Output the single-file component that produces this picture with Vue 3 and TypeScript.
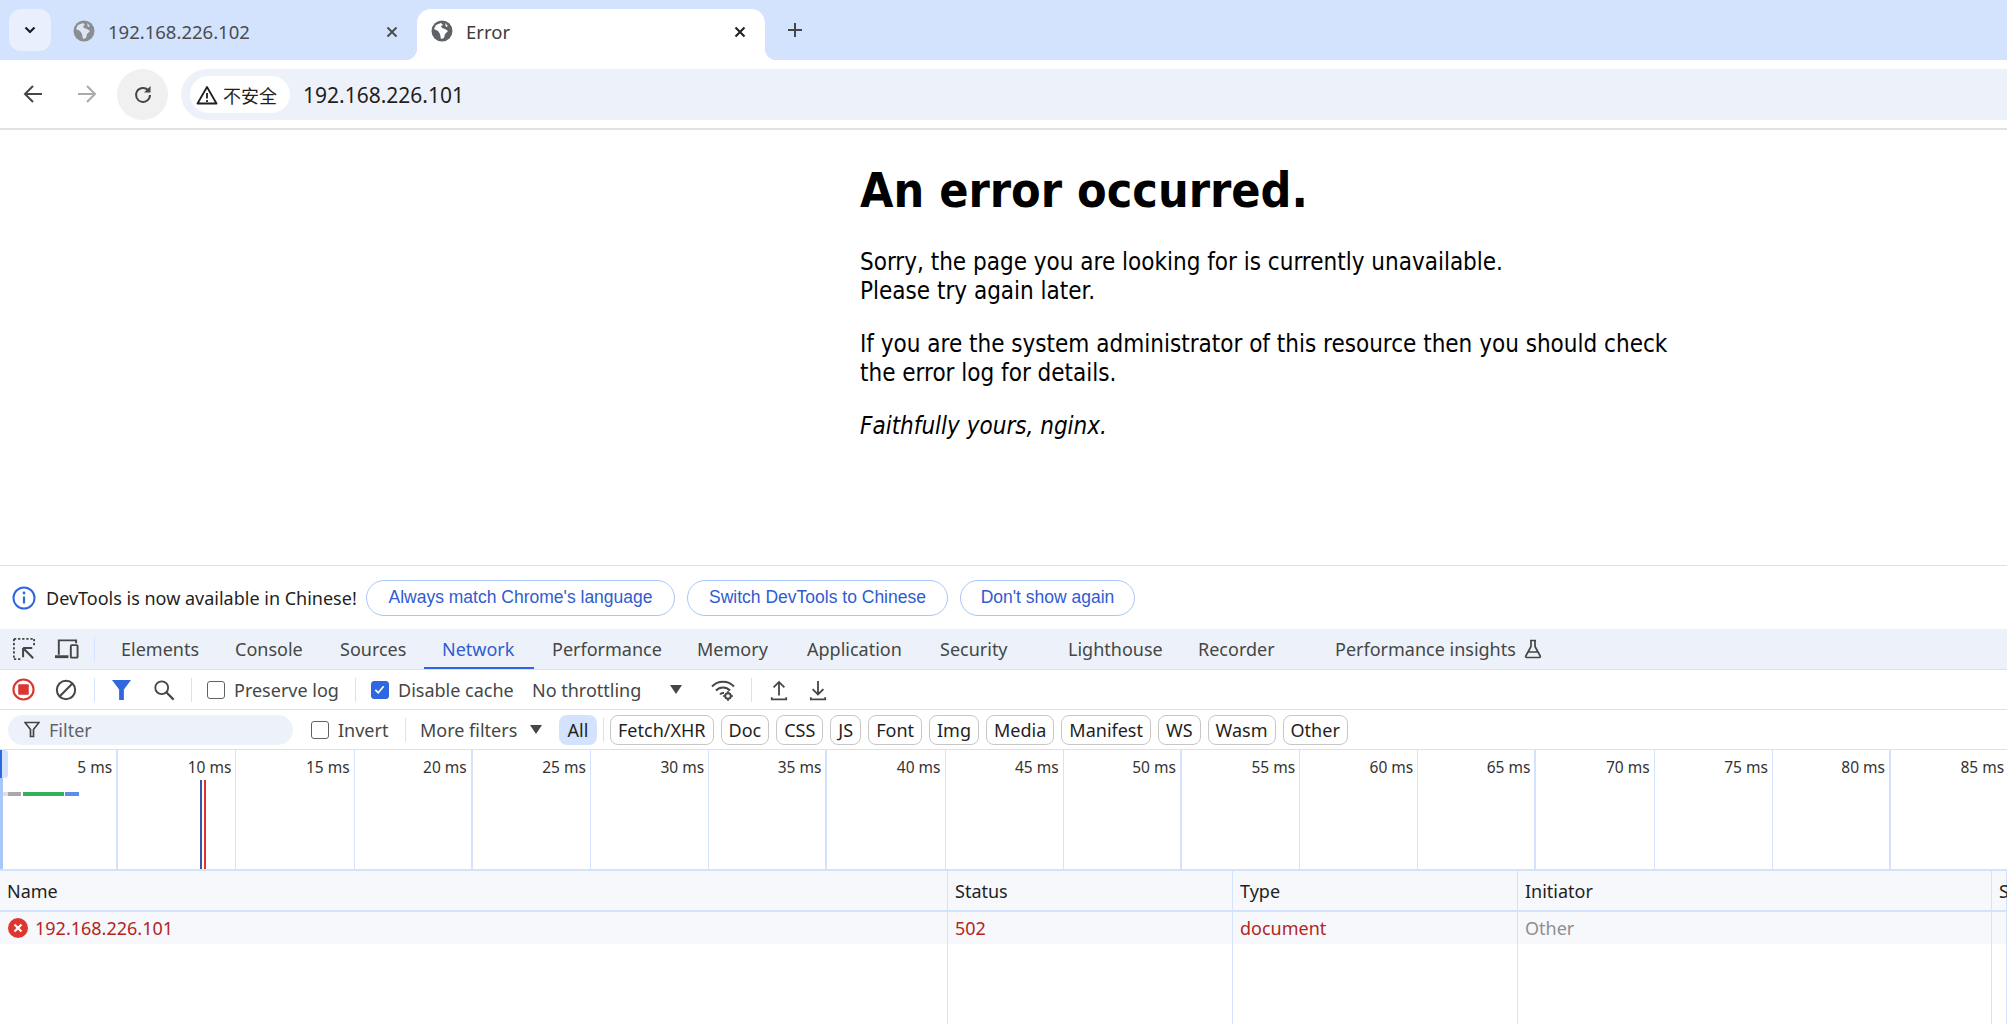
<script setup lang="ts">
const tabs = [
  { label: 'Elements', w: 114 },
  { label: 'Console', w: 105 },
  { label: 'Sources', w: 102 },
  { label: 'Network', w: 110, active: true },
  { label: 'Performance', w: 145 },
  { label: 'Memory', w: 110 },
  { label: 'Application', w: 133 },
  { label: 'Security', w: 128 },
  { label: 'Lighthouse', w: 130 },
  { label: 'Recorder', w: 135 },
]
const pills = ['Fetch/XHR', 'Doc', 'CSS', 'JS', 'Font', 'Img', 'Media', 'Manifest', 'WS', 'Wasm', 'Other']
const ticks = Array.from({ length: 18 }, (_, i) => (i + 1) * 5)
const cols = [
  { head: 'Name', w: 948 },
  { head: 'Status', w: 285, val: '502', cls: 'err' },
  { head: 'Type', w: 285, val: 'document', cls: 'err' },
  { head: 'Initiator', w: 474, val: 'Other', cls: 'muted' },
  { head: 'S', w: 15 },
]
</script>

<template>
  <div class="app">
    <header class="strip">
      <button class="tabsearch" aria-label="Search tabs">
        <svg width="14" height="14" viewBox="0 0 14 14"><path d="M2.5 4.5 7 9l4.5-4.5" fill="none" stroke="#1f1f1f" stroke-width="2.2"/></svg>
      </button>
      <div class="tab">
        <svg class="globe" viewBox="0 0 22 22"><circle cx="11" cy="11" r="10.5" fill="#8a8d91"/><path d="M10 3 5 5 3 9l4 2 2 3 1 5 3-1 1-4 3-3-3-2-3-1-1-2 2-1z M14 3l3 3-2 1z" fill="#dfe6f2"/></svg>
        <span class="tabtitle dim">192.168.226.102</span>
        <svg class="close" viewBox="0 0 14 14"><path d="M2.5 2.5l9 9m0-9-9 9" stroke="#444746" stroke-width="1.8"/></svg>
      </div>
      <div class="tab active">
        <svg class="globe" viewBox="0 0 22 22"><circle cx="11" cy="11" r="10.5" fill="#5f6368"/><path d="M10 3 5 5 3 9l4 2 2 3 1 5 3-1 1-4 3-3-3-2-3-1-1-2 2-1z M14 3l3 3-2 1z" fill="#fff"/></svg>
        <span class="tabtitle">Error</span>
        <svg class="close" viewBox="0 0 14 14"><path d="M2.5 2.5l9 9m0-9-9 9" stroke="#1f1f1f" stroke-width="2"/></svg>
      </div>
      <svg class="plus" viewBox="0 0 18 18"><path d="M9 2v14M2 9h14" stroke="#444746" stroke-width="2"/></svg>
    </header>

    <nav class="toolbar">
      <svg class="navicon" viewBox="0 0 22 22"><path d="M20 11H3.5M11 3l-8 8 8 8" fill="none" stroke="#444746" stroke-width="2"/></svg>
      <svg class="navicon fwd" viewBox="0 0 22 22"><path d="M2 11h16.5M11 3l8 8-8 8" fill="none" stroke="#a9abad" stroke-width="2"/></svg>
      <div class="reload">
        <svg width="22" height="22" viewBox="0 0 22 22"><path d="M18 11a7 7 0 1 1-2-5" fill="none" stroke="#444746" stroke-width="2"/><path d="M18.5 2v6.500H12z" fill="#444746"/></svg>
      </div>
      <div class="omnibox">
        <div class="chip">
          <svg width="22" height="20" viewBox="0 0 22 20"><path d="M11 2 1.500 18.500h19z" fill="none" stroke="#1f1f1f" stroke-width="1.800" stroke-linejoin="round"/><path d="M11 8v5.500M11 15v2" stroke="#1f1f1f" stroke-width="1.800"/></svg>
          <span>不安全</span>
        </div>
        <span class="url">192.168.226.101</span>
      </div>
    </nav>

    <main class="page">
      <h1>An error occurred.</h1>
      <p>Sorry, the page you are looking for is currently unavailable.<br />Please try again later.</p>
      <p>If you are the system administrator of this resource then you should check the error log for details.</p>
      <p><em>Faithfully yours, nginx.</em></p>
    </main>

    <section class="devtools">
      <div class="infobar">
        <svg class="info" viewBox="0 0 24 24"><circle cx="12" cy="12" r="10.500" fill="none" stroke="#2f67e0" stroke-width="2"/><path d="M12 10.500v7" stroke="#2f67e0" stroke-width="2.200"/><circle cx="12" cy="7" r="1.400" fill="#2f67e0"/></svg>
        <span class="infotext">DevTools is now available in Chinese!</span>
        <button class="infobtn b1">Always match Chrome's language</button>
        <button class="infobtn b2">Switch DevTools to Chinese</button>
        <button class="infobtn b3">Don't show again</button>
      </div>

      <div class="dtabs">
        <svg class="inspect" viewBox="0 0 24 24"><path d="M1 1h22M1 1v22M1 23h8M23 1v8" fill="none" stroke="#444746" stroke-width="2" stroke-dasharray="2.500 2"/><path d="M11 11h10M11 11v10M11 11l11 11" fill="none" stroke="#444746" stroke-width="2.200"/></svg>
        <svg class="device" viewBox="0 0 26 22"><path d="M5 17V2h18v3" fill="none" stroke="#444746" stroke-width="2"/><path d="M1 19h14" stroke="#444746" stroke-width="3"/><rect x="17.500" y="7" width="7" height="13" rx="1" fill="none" stroke="#444746" stroke-width="2"/></svg>
        <i class="vsep tabsep"></i>
        <div v-for="t in tabs" :key="t.label" class="dtab" :class="{ on: t.active }" :style="{ width: t.w + 'px' }">{{ t.label }}</div>
        <div class="dtab insights">Performance insights
          <svg class="flask" viewBox="0 0 18 20"><path d="M6 1.500h6M7 1.500v6L1.800 17a1 1 0 0 0 1 1.500h12.400a1 1 0 0 0 1-1.500L11 7.500v-6M4.500 13h9" fill="none" stroke="#444746" stroke-width="1.700"/></svg>
        </div>
      </div>

      <div class="nettools">
        <svg class="rec" viewBox="0 0 24 24"><circle cx="12" cy="12" r="10.500" fill="none" stroke="#dc362e" stroke-width="2.200"/><rect x="6.500" y="6.500" width="11" height="11" rx="1" fill="#dc362e"/></svg>
        <svg class="clear" viewBox="0 0 24 24"><circle cx="12" cy="12" r="10" fill="none" stroke="#444746" stroke-width="2.200"/><path d="M19 5 5 19" stroke="#444746" stroke-width="2.200"/></svg>
        <i class="vsep s1"></i>
        <svg class="funnel" viewBox="0 0 20 22"><path d="M0 1h20l-7.500 10v11h-5V11z" fill="#2f67e0"/></svg>
        <svg class="search" viewBox="0 0 24 24"><circle cx="9.500" cy="9.500" r="7" fill="none" stroke="#444746" stroke-width="2"/><path d="m14.500 14.500 8 8" stroke="#444746" stroke-width="2.400"/></svg>
        <i class="vsep s2"></i>
        <label class="check c1"><i class="box"></i>Preserve log</label>
        <i class="vsep s3"></i>
        <label class="check c2">
          <i class="box checked"><svg viewBox="0 0 18 18"><path d="m4 9.500 3.500 3.500L14 5" fill="none" stroke="#fff" stroke-width="2"/></svg></i>Disable cache
        </label>
        <span class="throttle">No throttling</span>
        <i class="tri t1"></i>
        <svg class="wifi" viewBox="0 0 26 24"><path d="M2 8.500a15 15 0 0 1 22 0M6 12.500a9.500 9.500 0 0 1 14 0M10 16.500a4 4 0 0 1 4-1.500" fill="none" stroke="#444746" stroke-width="2"/><circle cx="18" cy="18" r="2.800" fill="none" stroke="#444746" stroke-width="2"/><path d="M18 13v2M18 21v2M13 18h2M21 18h2" stroke="#444746" stroke-width="1.500"/></svg>
        <i class="vsep s4"></i>
        <svg class="updown up" viewBox="0 0 20 24"><path d="M10 18V3M4 9l6-6 6 6M2 20v2.500h16V20" fill="none" stroke="#444746" stroke-width="2"/></svg>
        <svg class="updown down" viewBox="0 0 20 24"><path d="M10 2v15M4 11l6 6 6-6M2 20v2.500h16V20" fill="none" stroke="#444746" stroke-width="2"/></svg>
      </div>

      <div class="filters">
        <div class="filterbox">
          <svg width="16" height="17" viewBox="0 0 16 17"><path d="M1 1.500h14L9.500 8.500v7h-3v-7z" fill="none" stroke="#444746" stroke-width="1.700"/></svg>
          <span>Filter</span>
        </div>
        <label class="check c3"><i class="box"></i>Invert</label>
        <i class="vsep s5"></i>
        <span class="more">More filters</span>
        <i class="tri t2"></i>
        <span class="allpill">All</span>
        <i class="vsep s6"></i>
        <span v-for="p in pills" :key="p" class="pill">{{ p }}</span>
      </div>

      <div class="overview">
        <div v-for="(t, i) in ticks" :key="t" class="tick" :class="{ thick: i % 3 === 0 }">{{ t }} ms</div>
        <i class="handle"></i>
        <i class="bar b-a"></i><i class="bar b-b"></i><i class="bar b-c"></i><i class="bar b-d"></i>
        <i class="mark dom"></i><i class="mark load"></i>
      </div>

      <div class="table">
        <div v-for="c in cols" :key="c.head" class="col" :style="{ width: c.w + 'px' }">
          <div class="th">{{ c.head }}</div>
          <div class="td" :class="c.cls">
            <template v-if="c.head === 'Name'">
              <svg class="erricon" viewBox="0 0 20 20"><circle cx="10" cy="10" r="10" fill="#dc362e"/><path d="m6.500 6.500 7 7m0-7-7 7" stroke="#fff" stroke-width="2.200"/></svg>
              <span class="err">192.168.226.101</span>
            </template>
            <template v-else>{{ c.val }}</template>
          </div>
        </div>
      </div>
    </section>
  </div>
</template>

<style>
html, body { margin: 0; background: #fff; overflow: hidden; }
</style>

<style scoped>
.app {
  width: 2007px;
  height: 1024px;
  overflow: hidden;
  display: flex;
  flex-direction: column;
  font-family: "Noto Sans", "Noto Sans CJK SC", sans-serif;
  color: #1f1f1f;
}
i { display: block; font-style: normal; flex: none; }
svg { flex: none; display: block; }

/* tab strip */
.strip {
  height: 60px;
  background: #d3e3fd;
  display: flex;
  align-items: flex-start;
  padding-top: 9px;
  box-sizing: border-box;
  flex: none;
}
.tabsearch {
  width: 42px;
  height: 42px;
  margin-left: 9px;
  border: 0;
  border-radius: 12px;
  background: #e9f0fd;
  display: flex;
  align-items: center;
  justify-content: center;
  padding: 0;
}
.tab {
  position: relative;
  height: 51px;
  width: 348px;
  margin-left: 15px;
  display: flex;
  align-items: flex-start;
  padding: 11px 0 0 22px;
  box-sizing: border-box;
}
.tab:first-of-type { margin-left: 0; }
.tab:not(.active) { width: 366px; margin-left: 0; }
.tab.active {
  background: #fff;
  border-radius: 14px 14px 0 0;
  width: 348px;
  margin-left: 0;
  padding-left: 14px;
}
.tab.active::before, .tab.active::after {
  content: "";
  position: absolute;
  bottom: 0;
  width: 12px;
  height: 12px;
}
.tab.active::before { left: -12px; background: radial-gradient(circle at 0 0, transparent 12px, #fff 12.500px); }
.tab.active::after { right: -12px; background: radial-gradient(circle at 100% 0, transparent 12px, #fff 12.500px); }
.globe { width: 22px; height: 22px; margin-top: 0; }
.tabtitle { margin-left: 13px; font-size: 18.500px; line-height: 24px; flex: 1; color: #3c3c3c; }
.tabtitle.dim { color: #4a4c50; }
.close { width: 14px; height: 14px; margin: 5px 18px 0 0; }
.plus { width: 18px; height: 18px; margin: 12px 0 0 21px; }

/* toolbar */
.toolbar {
  height: 69px;
  border-bottom: 2px solid #e2e2e2;
  box-sizing: content-box;
  background: #fff;
  border-radius: 12px 0 0 0;
  margin-top: 0;
  display: flex;
  align-items: flex-start;
  flex: none;
  height: 68px;
}
.navicon { width: 22px; height: 22px; margin: 23px 0 0 22px; }
.fwd { margin-left: 32px; }
.reload {
  width: 51px;
  height: 51px;
  margin: 9px 0 0 19px;
  border-radius: 50%;
  background: #f0f0f0;
  display: flex;
  align-items: center;
  justify-content: center;
}
.omnibox {
  margin: 9px 0 0 13px;
  flex: 1;
  height: 51px;
  background: #edf2fa;
  border-radius: 26px 0 0 26px;
  display: flex;
  align-items: center;
  padding-left: 9px;
}
.chip {
  height: 37px;
  width: 100px;
  background: #fff;
  border-radius: 19px;
  display: flex;
  align-items: center;
  padding-left: 6px;
  box-sizing: border-box;
  gap: 5px;
  font-size: 18px;
  font-family: "Noto Sans CJK SC", sans-serif;
}
.url { margin-left: 13px; font-size: 21px; color: #1f1f1f; }

/* page */
.page {
  height: 435px;
  flex: none;
  box-sizing: border-box;
  padding: 31px 0 0 860px;
  width: 1700px;
  font-family: "DejaVu Sans Condensed", "DejaVu Sans", sans-serif;
  font-size: 24px;
  line-height: 29px;
  color: #000;
}
.page h1 { font-size: 48px; line-height: 58px; margin: 0 0 29px; font-weight: 700; }
.page p { margin: 0 0 24px; }

/* devtools */
.devtools { flex: 1; display: flex; flex-direction: column; border-top: 1px solid #d3e3fd; min-height: 0; }
.infobar {
  height: 63px;
  flex: none;
  display: flex;
  align-items: center;
  padding-left: 12px;
  font-size: 18px;
  box-sizing: border-box;
}
.info { width: 24px; height: 24px; }
.infotext { margin-left: 10px; width: 320px; white-space: nowrap; }
.infobtn {
  height: 36px;
  border: 1px solid #a8c7fa;
  border-radius: 18px;
  background: #fff;
  color: #2f5cd0;
  font: 17.500px "Liberation Sans", sans-serif;
  padding: 0;
  flex: none;
}
.b1 { width: 309px; }
.b2 { width: 261px; margin-left: 12px; }
.b3 { width: 175px; margin-left: 12px; }

.dtabs {
  height: 41px;
  flex: none;
  background: #edf2fa;
  border-bottom: 1px solid #d3e3fd;
  box-sizing: border-box;
  display: flex;
  align-items: center;
  font-size: 18px;
  color: #444746;
}
.inspect { width: 22px; height: 22px; margin-left: 13px; }
.device { width: 25px; height: 22px; margin-left: 19px; }
.vsep { width: 1px; height: 24px; background: #d3e3fd; }
.tabsep { margin: 0 8px 0 15px; }
.dtab {
  height: 100%;
  display: flex;
  align-items: center;
  padding-left: 18px;
  box-sizing: border-box;
  white-space: nowrap;
  flex: none;
}
.dtab.on { color: #2f5cd0; box-shadow: inset 0 -2px 0 #2f67e0; }
.insights { padding-left: 20px; gap: 8px; }
.flask { width: 18px; height: 20px; }

.nettools, .filters {
  height: 39px;
  flex: none;
  border-bottom: 1px solid #d3e3fd;
  display: flex;
  align-items: center;
  font-size: 18px;
  color: #444746;
  box-sizing: content-box;
}
.filters { height: 39px; }
.rec { width: 23px; height: 23px; margin-left: 12px; }
.clear { width: 22px; height: 22px; margin-left: 20px; }
.s1 { margin-left: 17px; }
.funnel { width: 19px; height: 21px; margin-left: 17px; }
.search { width: 22px; height: 22px; margin-left: 22px; }
.s2 { margin-left: 16px; }
.check { display: flex; align-items: center; white-space: nowrap; }
.box {
  width: 18px;
  height: 18px;
  box-sizing: border-box;
  border: 1.500px solid #5f6368;
  border-radius: 3px;
  margin-right: 9px;
}
.box.checked { background: #2f67e0; border-color: #2f67e0; }
.box.checked svg { width: 15px; height: 15px; }
.c1 { margin-left: 15px; width: 148px; }
.s3 { margin-left: 0; }
.c2 { margin-left: 15px; width: 161px; }
.throttle { width: 138px; white-space: nowrap; }
.tri { width: 0; height: 0; border-left: 6px solid transparent; border-right: 6px solid transparent; border-top: 9px solid #444746; }
.wifi { width: 26px; height: 24px; margin-left: 28px; }
.s4 { margin-left: 15px; }
.updown { width: 18px; height: 22px; }
.up { margin-left: 18px; }
.down { margin-left: 21px; }

.filterbox {
  width: 285px;
  height: 30px;
  margin-left: 8px;
  background: #edf2fa;
  border-radius: 15px;
  display: flex;
  align-items: center;
  gap: 9px;
  padding-left: 16px;
  box-sizing: border-box;
  color: #5f6368;
  flex: none;
}
.c3 { margin-left: 18px; width: 94px; }
.s5 { margin-left: 0; }
.more { margin-left: 14px; width: 110px; white-space: nowrap; }
.allpill {
  width: 38px;
  height: 30px;
  margin-left: 17px;
  background: #d3e3fd;
  border-radius: 8px;
  display: flex;
  align-items: center;
  justify-content: center;
  color: #1f1f1f;
  flex: none;
}
.s6 { margin: 0 6px 0 6px; }
.pill {
  height: 30px;
  box-sizing: border-box;
  border: 1px solid #c7c7c7;
  border-radius: 8px;
  padding: 0 7px;
  margin-right: 7px;
  display: flex;
  align-items: center;
  color: #1f1f1f;
  white-space: nowrap;
  flex: none;
}

.overview {
  height: 121px;
  flex: none;
  position: relative;
  display: flex;
  border-bottom: 2px solid #d3e3fd;
  box-sizing: border-box;
  overflow: hidden;
}
.tick {
  width: 118.200px;
  flex: none;
  box-sizing: border-box;
  border-right: 1px solid #d3e3fd;
  text-align: right;
  padding: 6px 4px 0 0;
  font-size: 15.500px;
  line-height: 22px;
  color: #333;
}
.tick.thick { border-right-width: 2px; }
.handle {
  position: absolute;
  left: 0;
  top: 0;
  width: 3px;
  height: 100%;
  background: #a8c7fa;
}
.handle::after {
  content: "";
  position: absolute;
  left: 0;
  top: 0;
  width: 8px;
  height: 28px;
  background: #d3e3fd;
  border-radius: 0 3px 3px 0;
  box-shadow: inset 2px 0 0 #2f67e0;
}
.bar { position: absolute; top: 42px; height: 4px; }
.b-a { left: 3px; width: 5px; background: #e0e0e0; }
.b-b { left: 8px; width: 13px; background: #a9a9a9; }
.b-c { left: 23px; width: 41px; background: #35b15c; }
.b-d { left: 65px; width: 14px; background: #5b8def; }
.mark { position: absolute; top: 30px; bottom: 0; width: 2px; }
.dom { left: 200px; background: #3a55a8; }
.load { left: 204px; background: #dc362e; }

.table { flex: 1; display: flex; min-height: 0; font-size: 18px; }
.col { flex: none; box-sizing: border-box; border-right: 1px solid #d3e3fd; }
.th {
  height: 41px;
  background: #f6f8fc;
  border-bottom: 2px solid #d3e3fd;
  box-sizing: border-box;
  padding-left: 7px;
  display: flex;
  align-items: center;
  color: #1f1f1f;
  white-space: nowrap;
}
.td {
  height: 32px;
  background: #f6f8fc;
  padding-left: 7px;
  display: flex;
  align-items: center;
  box-sizing: border-box;
  white-space: nowrap;
}
.erricon { width: 20px; height: 20px; margin: 0 7px 0 1px; }
.err { color: #b3261e; }
.muted { color: #8f8f8f; }
</style>
